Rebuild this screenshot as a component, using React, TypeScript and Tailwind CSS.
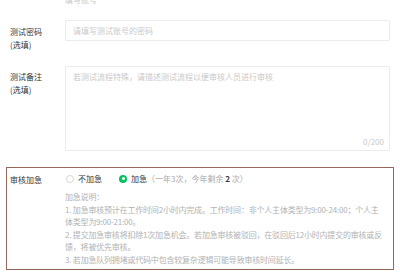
const font = { fontFamily: '"Noto Sans CJK SC", "Noto Sans", sans-serif' };

function Label({ title, sub }: { title: string; sub?: string }) {
  return (
    <div className="w-[55px] shrink-0 text-[8px] leading-[13px] text-[#353535]">
      <div>{title}</div>
      {sub && <div>{sub}</div>}
    </div>
  );
}

export default function App() {
  return (
    <div className="w-[400px] h-[280px] overflow-hidden bg-white" style={font}>
      {/* cut-off line from the field above */}
      <div className="-mt-[5px] pl-[65px] text-[8px] leading-[10px] text-[#c8c8c8]">填写账号</div>

      {/* 测试密码 */}
      <div className="flex items-start pl-[10px] mt-[15px] h-[21px]">
        <div className="pt-[5px]">
          <Label title="测试密码" sub="(选填)" />
        </div>
        <div className="w-[325px] h-[21px] border border-[#ececec] rounded-[1px] px-[7px] flex items-center text-[8px] text-[#c9c9c9]">
          请填写测试账号的密码
        </div>
      </div>

      {/* 测试备注 */}
      <div className="flex pl-[10px] mt-[25px]">
        <div className="pt-[4px]">
          <Label title="测试备注" sub="(选填)" />
        </div>
        <div className="w-[325px] h-[85px] border border-[#ececec] rounded-[1px] pl-[7px] pr-[5px] pt-[4px] pb-[2px] flex flex-col justify-between text-[8px] text-[#c9c9c9]">
          <div>若测试流程特殊，请描述测试流程以便审核人员进行审核</div>
          <div className="text-right">0/200</div>
        </div>
      </div>

      {/* 审核加急 */}
      <div className="ml-[6px] mt-[16px] w-[388px] h-[103px] border border-[#96665b] pl-[3px] pt-[4px]">
        <div className="flex">
          <div className="pt-[1px]">
            <Label title="审核加急" />
          </div>
          <div className="flex-1">
            <div className="flex items-center gap-[4px] text-[8px] leading-[13px] text-[#353535]">
              <span className="w-[8px] h-[8px] rounded-full border border-[#d6d6d6] ml-[1px]" />
              <span>不加急</span>
              <span className="ml-[13px] w-[8px] h-[8px] rounded-full bg-[#07c160] flex items-center justify-center">
                <span className="w-[3px] h-[3px] rounded-full bg-white" />
              </span>
              <span>
                加急
                <span className="text-[#a8a8a8]">（一年3次，今年剩余 </span>
                <span className="font-bold text-[#353535]">2</span>
                <span className="text-[#a8a8a8]"> 次）</span>
              </span>
            </div>
            <div className="mt-[6px] text-[8px] leading-[12.5px] text-[#b2b2b2] whitespace-nowrap tracking-[-0.2px]">
              <div>加急说明：</div>
              <div>1. 加急审核预计在工作时间2小时内完成。工作时间：非个人主体类型为9:00-24:00；个人主</div>
              <div>体类型为9:00-21:00。</div>
              <div>2. 提交加急审核将扣除1次加急机会。若加急审核被驳回，在驳回后12小时内提交的审核或反</div>
              <div>馈，将被优先审核。</div>
              <div>3. 若加急队列拥堵或代码中包含较复杂逻辑可能导致审核时间延长。</div>
            </div>
          </div>
        </div>
      </div>
    </div>
  );
}
